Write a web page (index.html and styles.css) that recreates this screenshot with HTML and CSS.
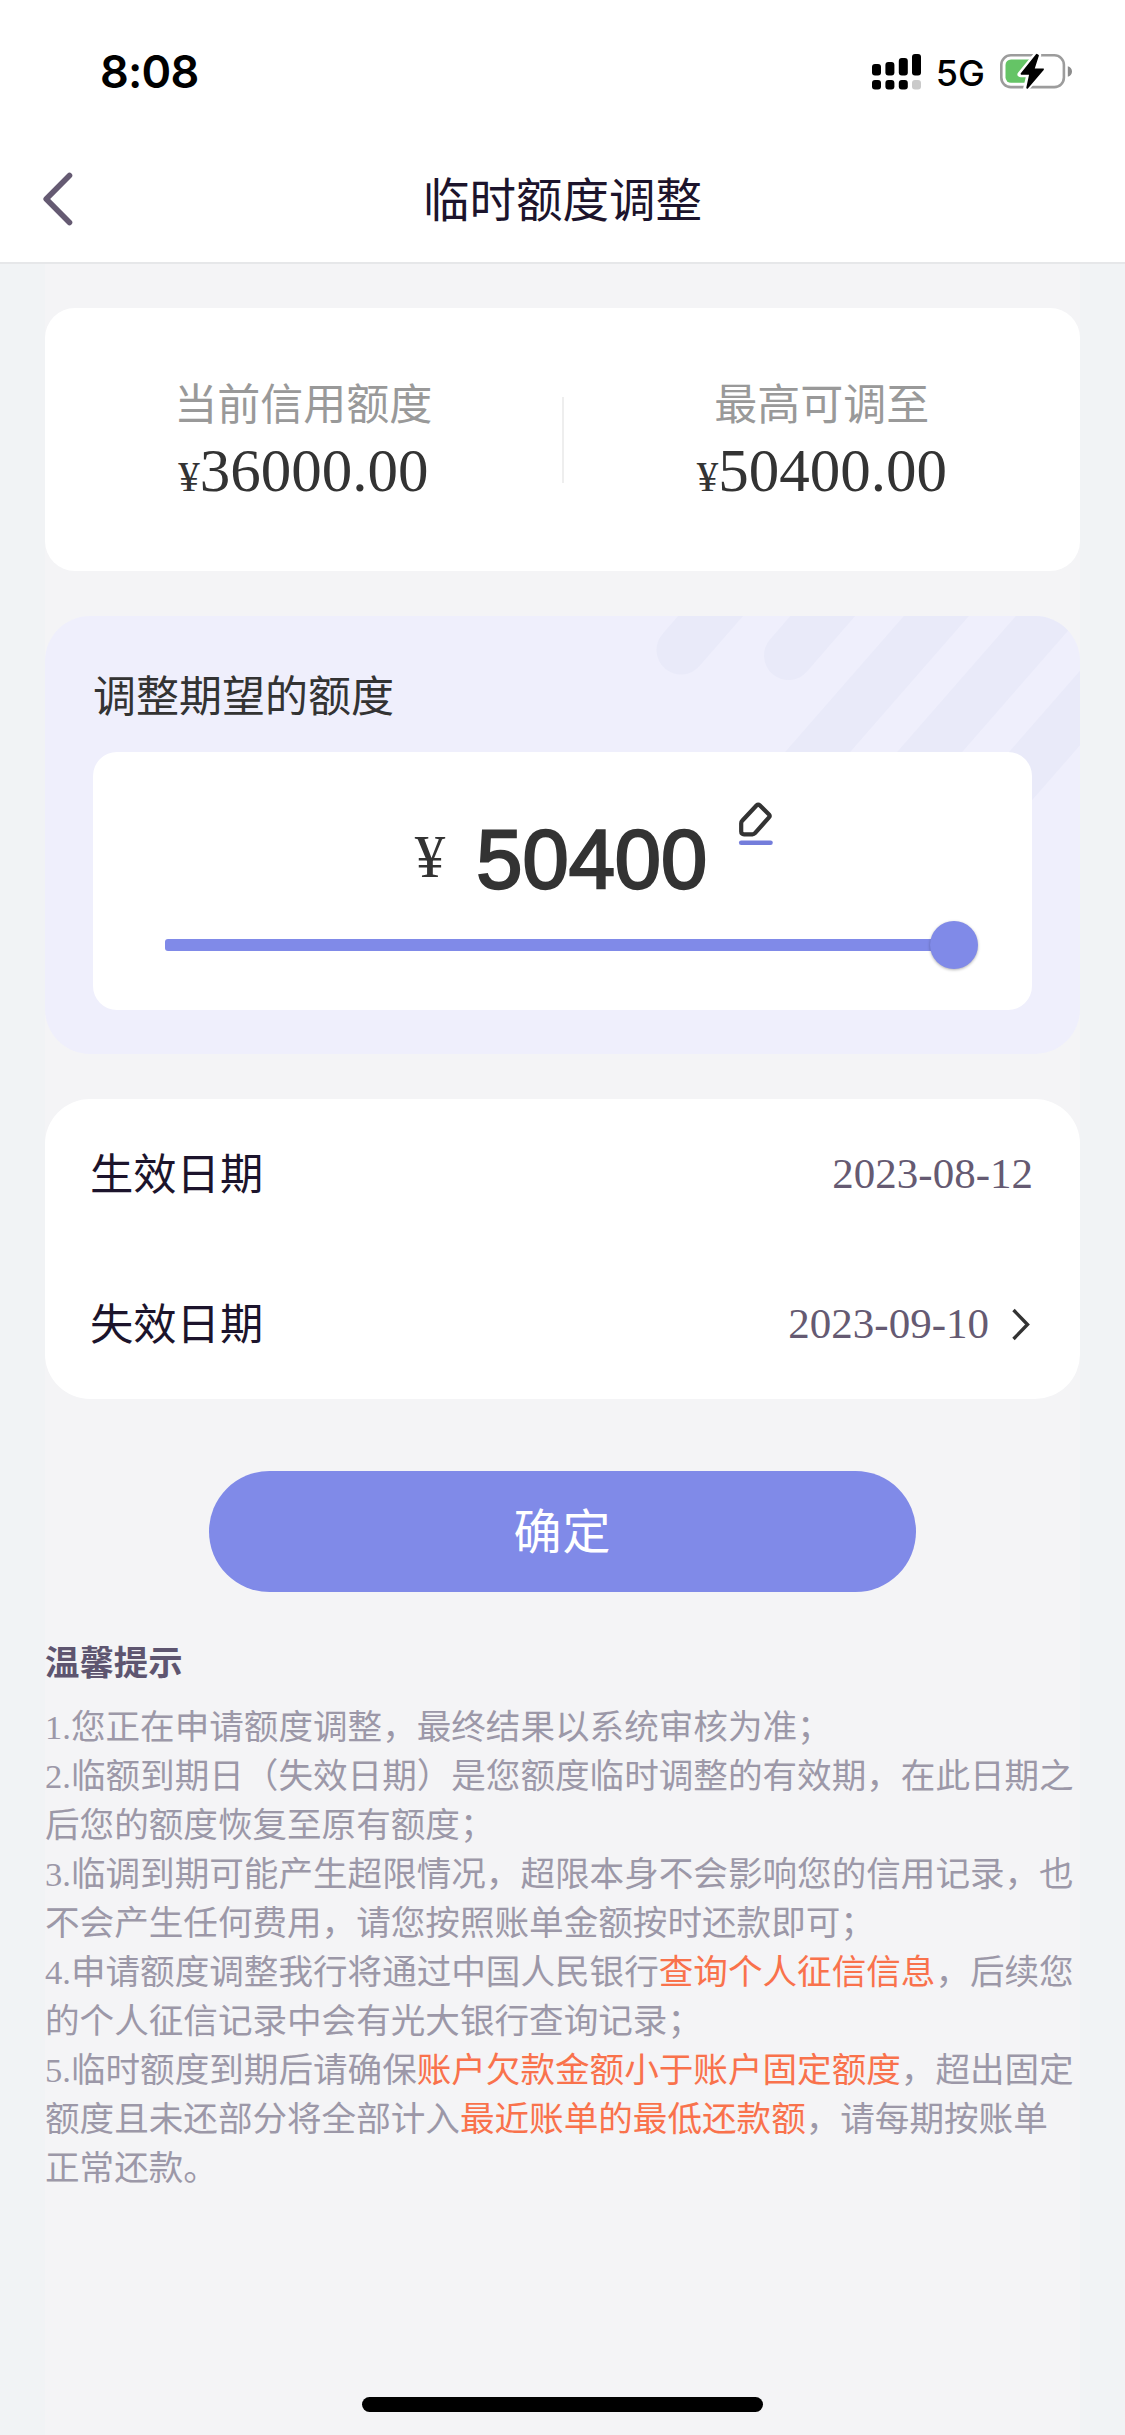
FILE: index.html
```html
<!DOCTYPE html>
<html lang="zh-CN">
<head>
<meta charset="utf-8">
<title>临时额度调整</title>
<link rel="stylesheet" href="styles.css">
</head>
<body>
<div class="screen">
  <header class="top">
    <div class="status">
      <span class="time">8:08</span>
      <div class="status-right">
        <svg class="signal" width="49" height="36" viewBox="0 0 49 36">
          <rect x="0" y="10" width="9" height="11.5" rx="3"/>
          <rect x="13.4" y="8" width="9" height="13.5" rx="3"/>
          <rect x="26.8" y="4" width="9" height="17.5" rx="3"/>
          <rect x="40" y="0" width="9" height="21.5" rx="3"/>
          <rect x="0" y="26" width="9" height="9.5" rx="3"/>
          <rect x="13.4" y="26" width="9" height="9.5" rx="3"/>
          <rect x="26.8" y="26" width="9" height="9.5" rx="3"/>
          <rect x="40" y="26" width="9" height="9.5" rx="3" fill="#cacaca"/>
        </svg>
        <span class="network">5G</span>
        <svg class="battery" width="74" height="38" viewBox="0 1 74 38">
          <rect x="1.3" y="3.3" width="62.6" height="31.8" rx="9.5" fill="#fff" stroke="#9c9c9c" stroke-width="2.6"/>
          <rect x="5.5" y="7.5" width="30" height="23.3" rx="5.5" fill="#65c466"/>
          <path d="M67.8 14.2C70.6 14.9 72 17 72 19.4S70.6 24 67.8 24.700z" fill="#8c8c8c"/>
          <path d="M36.700 2.500 20.500 22.300H29.500L26.200 36.500 43.500 16.800H34.200L38.200 3.200z" fill="#000" stroke="#fff" stroke-width="6" stroke-linejoin="round"/>
          <path d="M36.700 2.800 21.500 21.800H30.200L27.200 35.800 43 17.300H33.600L38 3.500z" fill="#000" stroke="#000" stroke-width="1.800" stroke-linejoin="round"/>
        </svg>
      </div>
    </div>
    <nav class="navbar">
      <svg class="back" width="36" height="60" viewBox="0 0 36 60"><path d="M29.500 6.500 6.200 30 29.500 53.500" fill="none" stroke="#655a72" stroke-width="5.600" stroke-linecap="round" stroke-linejoin="round"/></svg>
      <h1 class="title">临时额度调整</h1>
    </nav>
  </header>

  <main class="content">
    <section class="card limits">
      <div class="limit">
        <span class="limit-label">当前信用额度</span>
        <span class="limit-value"><small>¥</small>36000.00</span>
      </div>
      <div class="divider"></div>
      <div class="limit">
        <span class="limit-label">最高可调至</span>
        <span class="limit-value"><small>¥</small>50400.00</span>
      </div>
    </section>

    <section class="adjust">
      <svg class="stripes" width="1035" height="438" viewBox="0 0 1035 438">
        <g fill="none" stroke="#e9eaf9" stroke-width="49" stroke-linecap="round">
          <path d="M636 34 696 -35"/>
          <path d="M743.500 39.500 808 -35"/>
          <path d="M729 186 935 -50"/>
          <path d="M841 186 1047 -50"/>
          <path d="M953 186 1159 -50"/>
        </g>
      </svg>
      <h2 class="adjust-title">调整期望的额度</h2>
      <div class="panel">
        <div class="amount">
          <span class="yen">¥</span>
          <span class="digits">50400</span>
          <svg class="edit" width="36" height="46" viewBox="0 0 36 46">
            <path d="M18.700 4.300Q20.200 2.800 21.700 4.300L31 13.500Q32.300 14.900 31 16.300L17 32.200Q16 33.300 14.500 33.300H6Q3.200 33.300 3.200 30.500V22.200Q3.200 20.700 4.200 19.700z" fill="none" stroke="#333" stroke-width="4.200" stroke-linejoin="round"/>
            <path d="M3.200 41.700H32.500" stroke="#747ddb" stroke-width="4.600" stroke-linecap="round"/>
          </svg>
        </div>
        <div class="slider"><div class="track"></div><div class="thumb"></div></div>
      </div>
    </section>

    <section class="card dates">
      <div class="date-row"><span class="date-label">生效日期</span><span class="date-value">2023-08-12</span></div>
      <div class="date-row">
        <span class="date-label">失效日期</span>
        <span class="date-value">2023-09-10
          <svg class="next" width="22" height="34" viewBox="0 0 22 34"><path d="M2.500 3 16.500 17.500 2.500 32" fill="none" stroke="#333" stroke-width="3.400"/></svg>
        </span>
      </div>
    </section>

    <button class="submit">确定</button>

    <section class="tips">
      <h3 class="tips-title">温馨提示</h3>
      <p>1.您正在申请额度调整，最终结果以系统审核为准；</p>
      <p>2.临额到期日（失效日期）是您额度临时调整的有效期，在此日期之后您的额度恢复至原有额度；</p>
      <p>3.临调到期可能产生超限情况，超限本身不会影响您的信用记录，也不会产生任何费用，请您按照账单金额按时还款即可；</p>
      <p>4.申请额度调整我行将通过中国人民银行<em>查询个人征信信息</em>，后续您的个人征信记录中会有光大银行查询记录；</p>
      <p>5.临时额度到期后请确保<em>账户欠款金额小于账户固定额度</em>，超出固定额度且未还部分将全部计入<em>最近账单的最低还款额</em>，请每期按账单正常还款。</p>
    </section>
    <div class="home-bar"></div>
  </main>
</div>
</body>
</html>
```

FILE: styles.css
```css
* { box-sizing: border-box; }

body {
  margin: 0;
  background: #f1f3f5;
  font-family: "Liberation Serif", "Noto Sans CJK SC", sans-serif;
  color: #333;
}

h1, h2, h3, p { margin: 0; font-weight: 400; }

.screen {
  width: 1125px;
  height: 2435px;
  display: flex;
  flex-direction: column;
}

.top {
  height: 264px;
  background: #fff;
  border-bottom: 2px solid #e6e7e9;
}

.status {
  height: 136px;
  padding: 8px 51px 0 100px;
  display: flex;
  justify-content: space-between;
  align-items: center;
  font-family: Inter, sans-serif;
  color: #000;
}

.time { margin-bottom: 2px; font-size: 45px; font-weight: 600; letter-spacing: -0.8px; }
.status-right { display: flex; align-items: center; }
.network { margin: 1px 15px 0; font-size: 36px; font-weight: 500; line-height: 36px; }

.navbar {
  height: 126px;
  padding: 0 40px;
  display: grid;
  grid-template-columns: 60px 1fr 60px;
  align-items: center;
}

.title {
  padding-top: 5px;
  font-size: 46.5px;
  line-height: 60px;
  text-align: center;
  color: #1c142c;
}

.content {
  flex: 1;
  width: 1035px;
  margin: 0 auto;
  padding-top: 44px;
  background: #f4f4f6;
  display: flex;
  flex-direction: column;
}

.card { background: #fff; }

.limits {
  height: 263px;
  border-radius: 30px;
  display: grid;
  grid-template-columns: 1fr 2px 1fr;
  align-items: center;
}

.limit {
  padding-top: 5px;
  display: flex;
  flex-direction: column;
  align-items: center;
}

.limit-label { font-size: 43px; line-height: 64px; color: #999; }
.limit-value { font-size: 61px; line-height: 66px; }
.limit-value small { font-size: 43px; }
.divider { height: 86px; background: #eee; }

.adjust {
  position: relative;
  height: 438px;
  margin-top: 45px;
  padding: 50px 48px 0;
  border-radius: 45px;
  background: #efeffc;
  overflow: hidden;
}

.stripes { position: absolute; top: 0; left: 0; }
.adjust-title { position: relative; font-size: 43px; line-height: 64px; }

.panel {
  position: relative;
  height: 258px;
  margin-top: 22px;
  padding: 46px 54px 0 72px;
  border-radius: 24px;
  background: #fff;
}

.amount {
  height: 123px;
  padding-left: 46px;
  display: flex;
  justify-content: center;
}

.yen { margin-top: 23px; font-size: 61px; line-height: 72px; }

.digits {
  margin: 16px 31px 0;
  font-family: "Liberation Sans", sans-serif;
  font-size: 83px;
  line-height: 92px;
  -webkit-text-stroke: 2.4px #333;
}

.edit { margin-top: 3px; }

.slider { height: 48px; display: flex; align-items: center; }
.track { flex: 1; height: 12px; margin-right: -5px; border-radius: 3px; background: #808ae8; }

.thumb {
  width: 48px;
  height: 48px;
  border-radius: 50%;
  background: #808ae8;
  box-shadow: 0 1px 3px rgba(0, 0, 0, .3);
}

.dates {
  height: 300px;
  margin-top: 45px;
  padding: 0 47px 0 45px;
  border-radius: 45px;
}

.date-row {
  height: 150px;
  display: flex;
  align-items: center;
  justify-content: space-between;
  font-size: 43px;
  line-height: 64px;
}

.date-label { padding-top: 2px; color: #1c142c; font-size: 43.3px; }
.date-value { display: flex; align-items: center; color: #655a72; }
.next { margin-left: 22px; }

.submit {
  width: 707px;
  height: 121px;
  margin: 72px auto 0;
  padding: 3px 0 0;
  border: 0;
  border-radius: 61px;
  background: #808ae8;
  color: #fff;
  font: 48px/72px "Liberation Serif", "Noto Sans CJK SC", sans-serif;
  letter-spacing: 1px;
}

.tips {
  margin-top: 47px;
  font-size: 34.6px;
  line-height: 49px;
  color: #9c98a8;
}

.tips-title { margin-bottom: 15px; font-size: 34.4px; font-weight: 700; color: #5e5570; }
.tips em { font-style: normal; color: #f9724c; }

.home-bar {
  width: 401px;
  height: 15px;
  margin: auto auto 23px;
  border-radius: 8px;
  background: #000;
}
```
